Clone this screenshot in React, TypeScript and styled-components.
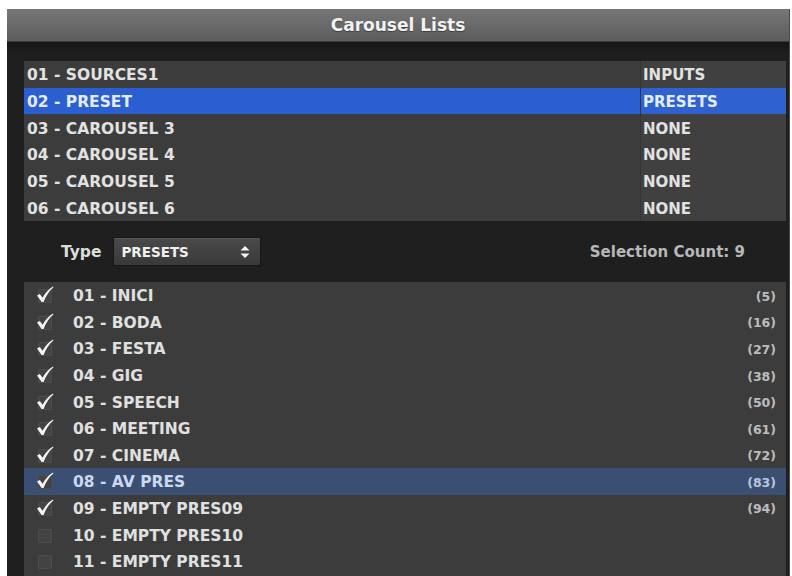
import React from 'react';
import styled, { createGlobalStyle } from 'styled-components';

// == data =========================================================================================
const carousels = [
  { name: '01 - SOURCES1', type: 'INPUTS' },
  { name: '02 - PRESET', type: 'PRESETS' },
  { name: '03 - CAROUSEL 3', type: 'NONE' },
  { name: '04 - CAROUSEL 4', type: 'NONE' },
  { name: '05 - CAROUSEL 5', type: 'NONE' },
  { name: '06 - CAROUSEL 6', type: 'NONE' },
];

const presets = [
  { name: '01 - INICI', count: 5, checked: true },
  { name: '02 - BODA', count: 16, checked: true },
  { name: '03 - FESTA', count: 27, checked: true },
  { name: '04 - GIG', count: 38, checked: true },
  { name: '05 - SPEECH', count: 50, checked: true },
  { name: '06 - MEETING', count: 61, checked: true },
  { name: '07 - CINEMA', count: 72, checked: true },
  { name: '08 - AV PRES', count: 83, checked: true },
  { name: '09 - EMPTY PRES09', count: 94, checked: true },
  { name: '10 - EMPTY PRES10', count: null, checked: false },
  { name: '11 - EMPTY PRES11', count: null, checked: false },
];

// == styles =======================================================================================
const GlobalStyle = createGlobalStyle`
  html, body {
    margin: 0;
    background: #ffffff;
    overflow: hidden;
  }
  body {
    font-family: "DejaVu Sans", "Liberation Sans", sans-serif;
  }
`;

const Window = styled.div`
  margin: 9px 2px 0 7px;
  height: 567px;
  display: flex;
  flex-direction: column;
  background: #1d1d1d;
  border-right: 1px solid #4a4a4a;
  overflow: hidden;
`;

const TitleBar = styled.div`
  height: 32px;
  flex: none;
  display: flex;
  align-items: center;
  justify-content: center;
  background: linear-gradient( #777777, #5c5c5c );
  border-bottom: 1px solid #3a3a3a;
  color: #f2f2f2;
  font-size: 17px;
  font-weight: bold;
  text-shadow: 0 1px 1px rgba( 0, 0, 0, 0.4 );
`;

const Body = styled.div`
  flex: 1;
  display: flex;
  flex-direction: column;
  padding: 19px 3px 0 17px;
  background: linear-gradient( #151515 0, #1f1f1f 12px );
`;

const TopList = styled.div`
  display: flex;
  flex-direction: column;
  background: #3c3c3c;
`;

const TopRow = styled.div<{ selected: boolean }>`
  height: 26.67px;
  display: grid;
  grid-template-columns: 1fr 146px;
  background: ${ ( { selected } ) => ( selected ? '#2b5ed0' : 'transparent' ) };
  color: ${ ( { selected } ) => ( selected ? '#e4ecff' : '#e2e2e2' ) };
  font-size: 15.5px;
  font-weight: bold;
`;

const Cell = styled.div<{ side?: boolean }>`
  display: flex;
  align-items: center;
  padding: 2px 0 0 ${ ( { side } ) => ( side ? '2px' : '3px' ) };
  border-left: ${ ( { side } ) => ( side ? '1px solid #353535' : 'none' ) };
  background: ${ ( { side } ) => ( side ? 'rgba( 255, 255, 255, 0.025 )' : 'none' ) };
  font-size: ${ ( { side } ) => ( side ? '15px' : 'inherit' ) };
  white-space: nowrap;
`;

const Toolbar = styled.div`
  height: 60px;
  flex: none;
  display: flex;
  align-items: center;
  padding: 1px 41px 0 37px;
`;

const TypeLabel = styled.span`
  color: #dcdcdc;
  font-size: 15.5px;
  font-weight: bold;
  margin-right: 12px;
`;

const Select = styled.div`
  width: 148px;
  height: 29px;
  box-sizing: border-box;
  display: flex;
  align-items: center;
  justify-content: space-between;
  padding: 0 9px 0 7px;
  background: linear-gradient( #4a4a4a, #393939 );
  border: 1px solid #161616;
  border-radius: 2px;
  box-shadow: inset 0 1px 0 rgba( 255, 255, 255, 0.08 );
  color: #f0f0f0;
  font-size: 13.5px;
  font-weight: bold;
`;

const Spacer = styled.div`
  flex: 1;
`;

const CountLabel = styled.span`
  color: #b8b8b8;
  font-size: 15px;
  font-weight: bold;
`;

const BottomList = styled.div`
  flex: 1;
  display: flex;
  flex-direction: column;
  background: #3c3c3c;
`;

const PresetRow = styled.div<{ selected: boolean }>`
  height: 26.6px;
  flex: none;
  display: flex;
  align-items: center;
  padding: 2px 10px 0 14px;
  box-sizing: border-box;
  background: ${ ( { selected } ) => ( selected ? '#3a4f72' : 'transparent' ) };
  color: ${ ( { selected } ) => ( selected ? '#cbd8f0' : '#e0e0e0' ) };
  font-size: 15.5px;
  font-weight: bold;
`;

const CheckBox = styled.div`
  position: relative;
  width: 12px;
  height: 12px;
  flex: none;
  margin-right: 21px;
  background: #434343;
  border: 1px solid #4d4d4d;
  border-radius: 1px;
`;

const Check = styled.svg`
  position: absolute;
  left: -4px;
  top: -5px;
`;

const PresetName = styled.span`
  flex: 1;
  white-space: nowrap;
`;

const PresetCount = styled.span<{ selected: boolean }>`
  color: ${ ( { selected } ) => ( selected ? '#b9c6de' : '#bcbcbc' ) };
  font-size: 12.5px;
`;

// == components ===================================================================================
function Arrows(): JSX.Element {
  return (
    <svg width="12" height="16" viewBox="0 0 12 16">
      <path d="M1.5 6.5 L6 2 L10.5 6.5 Z" fill="#f4f4f4" />
      <path d="M1.5 9.5 L6 14 L10.5 9.5 Z" fill="#f4f4f4" />
    </svg>
  );
}

function CheckMark(): JSX.Element {
  return (
    <Check width="20" height="20" viewBox="0 0 20 20">
      <path
        d="M2 10.5 L4.8 9 L7.6 12.8 C10 8.2 13.4 4.2 18 1.5 L18.4 2.4 C14.2 5.8 11 10.6 8.6 17 L6.6 17 Z"
        fill="#f4f4f4"
      />
    </Check>
  );
}

export default function App(): JSX.Element {
  return (
    <>
      <GlobalStyle />
      <Window>
        <TitleBar>Carousel Lists</TitleBar>
        <Body>
          <TopList>
            { carousels.map( ( c, i ) => (
              <TopRow key={ c.name } selected={ i === 1 }>
                <Cell>{ c.name }</Cell>
                <Cell side>{ c.type }</Cell>
              </TopRow>
            ) ) }
          </TopList>

          <Toolbar>
            <TypeLabel>Type</TypeLabel>
            <Select>
              <span>PRESETS</span>
              <Arrows />
            </Select>
            <Spacer />
            <CountLabel>Selection Count: 9</CountLabel>
          </Toolbar>

          <BottomList>
            { presets.map( ( p, i ) => (
              <PresetRow key={ p.name } selected={ i === 7 }>
                <CheckBox>{ p.checked && <CheckMark /> }</CheckBox>
                <PresetName>{ p.name }</PresetName>
                { p.count !== null && (
                  <PresetCount selected={ i === 7 }>({ p.count })</PresetCount>
                ) }
              </PresetRow>
            ) ) }
          </BottomList>
        </Body>
      </Window>
    </>
  );
}
